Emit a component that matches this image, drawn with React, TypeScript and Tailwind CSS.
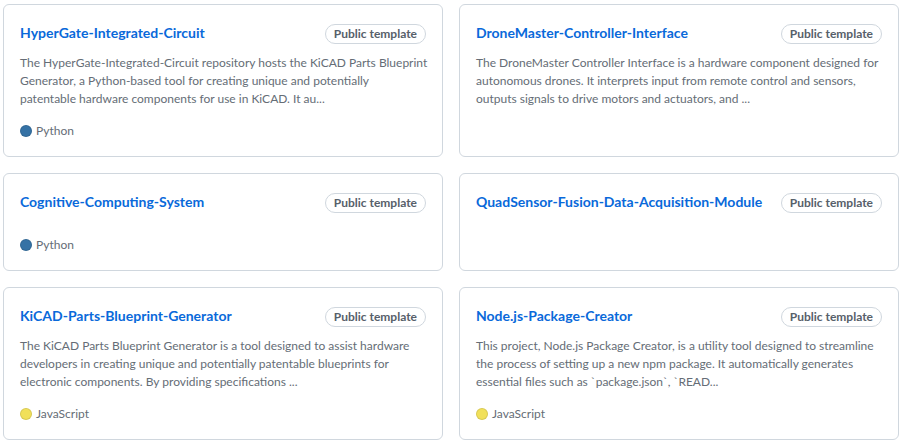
import React from "react";

type Repo = {
  name: string;
  desc: string[];
  lang?: { name: string; color: string };
};

const repos: Repo[] = [
  {
    name: "HyperGate-Integrated-Circuit",
    desc: [
      "The HyperGate-Integrated-Circuit repository hosts the KiCAD Parts Blueprint",
      "Generator, a Python-based tool for creating unique and potentially",
      "patentable hardware components for use in KiCAD. It au...",
    ],
    lang: { name: "Python", color: "#3572A5" },
  },
  {
    name: "DroneMaster-Controller-Interface",
    desc: [
      "The DroneMaster Controller Interface is a hardware component designed for",
      "autonomous drones. It interprets input from remote control and sensors,",
      "outputs signals to drive motors and actuators, and ...",
    ],
  },
  {
    name: "Cognitive-Computing-System",
    desc: [],
    lang: { name: "Python", color: "#3572A5" },
  },
  {
    name: "QuadSensor-Fusion-Data-Acquisition-Module",
    desc: [],
  },
  {
    name: "KiCAD-Parts-Blueprint-Generator",
    desc: [
      "The KiCAD Parts Blueprint Generator is a tool designed to assist hardware",
      "developers in creating unique and potentially patentable blueprints for",
      "electronic components. By providing specifications ...",
    ],
    lang: { name: "JavaScript", color: "#f1e05a" },
  },
  {
    name: "Node.js-Package-Creator",
    desc: [
      "This project, Node.js Package Creator, is a utility tool designed to streamline",
      "the process of setting up a new npm package. It automatically generates",
      "essential files such as `package.json`, `READ...",
    ],
    lang: { name: "JavaScript", color: "#f1e05a" },
  },
];

function Card({ repo }: { repo: Repo }) {
  return (
    <div className="flex flex-col rounded-md border border-[#d0d7de] bg-white p-4">
      <div className="flex items-start">
        <a className="mr-2 whitespace-nowrap pt-[1px] text-[14px] font-bold leading-[21px] text-[#0969da]">
          {repo.name}
        </a>
        <span className="ml-auto mt-[3px] whitespace-nowrap rounded-full border border-[#d0d7de] px-[8px] text-[12px] font-bold leading-[18px] text-[#57606a]">
          Public template
        </span>
      </div>
      <p
        className={`mb-[11px] mt-[10px] flex-1 text-[12px] leading-[18px] text-[#656d76] ${
          repo.desc.length ? "pb-[1px]" : ""
        }`}
      >
        {repo.desc.map((l, i) => (
          <span key={i} className="block whitespace-nowrap">
            {l}
          </span>
        ))}
      </p>
      {repo.lang && (
        <p className="flex h-[20px] items-center pt-[2px] text-[12px] leading-[18px] text-[#656d76]">
          <span
            className="mr-[4px] inline-block h-[12px] w-[12px] rounded-full border border-black/10"
            style={{ backgroundColor: repo.lang.color }}
          />
          <span>{repo.lang.name}</span>
        </p>
      )}
    </div>
  );
}

export default function App() {
  return (
    <div
      className="min-h-[446px] w-[906px] bg-white pl-[3px] pt-[4px]"
      style={{ fontFamily: 'Lato, "Noto Sans", sans-serif' }}
    >
      <div className="grid w-[896px] grid-cols-2 gap-4">
        {repos.map((r) => (
          <Card key={r.name} repo={r} />
        ))}
      </div>
    </div>
  );
}
